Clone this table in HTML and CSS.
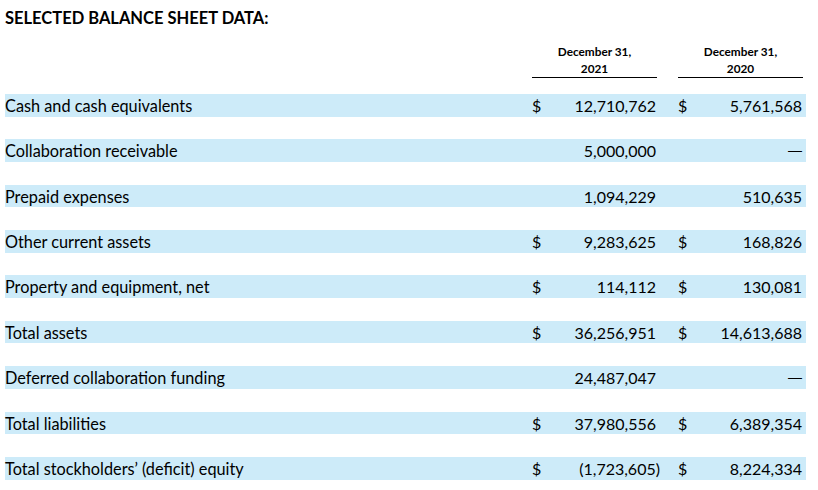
FILE: index.html
```html
<!DOCTYPE html>
<html>
<head>
<meta charset="utf-8">
<link rel="stylesheet" href="styles.css">
</head>
<body>
<div class="page">
  <div class="title">SELECTED BALANCE SHEET DATA:</div>
  <div class="head">
    <div class="label"></div>
    <div class="colhead"><div class="l1">December 31,</div><div class="l2">2021</div></div>
    <div></div>
    <div class="colhead"><div class="l1">December 31,</div><div class="l2">2020</div></div>
    <div></div>
  </div>
  <div class="rows">
    <div class="row">
      <div class="label">Cash and cash equivalents</div>
      <div class="amt"><span class="cur">$</span><span class="val">12,710,762</span></div>
      <div></div>
      <div class="amt"><span class="cur">$</span><span class="val">5,761,568</span></div>
      <div></div>
    </div>
    <div class="row">
      <div class="label">Collaboration receivable</div>
      <div class="amt"><span class="cur"></span><span class="val">5,000,000</span></div>
      <div></div>
      <div class="amt"><span class="cur"></span><span class="val dash">—</span></div>
      <div></div>
    </div>
    <div class="row">
      <div class="label">Prepaid expenses</div>
      <div class="amt"><span class="cur"></span><span class="val">1,094,229</span></div>
      <div></div>
      <div class="amt"><span class="cur"></span><span class="val">510,635</span></div>
      <div></div>
    </div>
    <div class="row">
      <div class="label">Other current assets</div>
      <div class="amt"><span class="cur">$</span><span class="val">9,283,625</span></div>
      <div></div>
      <div class="amt"><span class="cur">$</span><span class="val">168,826</span></div>
      <div></div>
    </div>
    <div class="row">
      <div class="label">Property and equipment, net</div>
      <div class="amt"><span class="cur">$</span><span class="val">114,112</span></div>
      <div></div>
      <div class="amt"><span class="cur">$</span><span class="val">130,081</span></div>
      <div></div>
    </div>
    <div class="row">
      <div class="label">Total assets</div>
      <div class="amt"><span class="cur">$</span><span class="val">36,256,951</span></div>
      <div></div>
      <div class="amt"><span class="cur">$</span><span class="val">14,613,688</span></div>
      <div></div>
    </div>
    <div class="row">
      <div class="label">Deferred collaboration funding</div>
      <div class="amt"><span class="cur"></span><span class="val">24,487,047</span></div>
      <div></div>
      <div class="amt"><span class="cur"></span><span class="val dash">—</span></div>
      <div></div>
    </div>
    <div class="row">
      <div class="label">Total liabilities</div>
      <div class="amt"><span class="cur">$</span><span class="val">37,980,556</span></div>
      <div></div>
      <div class="amt"><span class="cur">$</span><span class="val">6,389,354</span></div>
      <div></div>
    </div>
    <div class="row">
      <div class="label">Total stockholders’ (deficit) equity</div>
      <div class="amt"><span class="cur">$</span><span class="val">(1,723,605<span class="paren">)</span></span></div>
      <div></div>
      <div class="amt"><span class="cur">$</span><span class="val">8,224,334</span></div>
      <div></div>
    </div>
  </div>
</div>
</body>
</html>
```

FILE: styles.css
```css
html, body {
  margin: 0;
  padding: 0;
  background: #ffffff;
}
.page {
  width: 801px;
  margin-left: 5px;
  font-family: Lato, "Open Sans", sans-serif;
  color: #000000;
}
.title {
  margin-top: 8px;
  font-size: 16.5px;
  line-height: 20px;
  font-weight: 700;
}
.head,
.row {
  display: grid;
  grid-template-columns: 527px 125px 21px 125px 3px;
}
.head {
  margin-top: 15px;
}
.colhead {
  text-align: center;
  font-size: 11.8px;
  font-weight: 700;
  border-bottom: 1px solid #000000;
}
.colhead .l1 {
  line-height: 18px;
}
.colhead .l2 {
  line-height: 16px;
}
.rows {
  margin-top: 16px;
  display: flex;
  flex-direction: column;
  gap: 22.675px;
}
.row {
  height: 22.7px;
  background: #cdebf9;
  font-size: 16px;
  line-height: 23.5px;
}
.label {
  white-space: nowrap;
  font-size: 16.3px;
}
.amt {
  display: flex;
  justify-content: space-between;
  padding-right: 1px;
  white-space: nowrap;
}
.dash {
  font-family: "Liberation Sans", sans-serif;
  font-size: 14px;
}
.paren {
  margin-right: -4px;
}
```
